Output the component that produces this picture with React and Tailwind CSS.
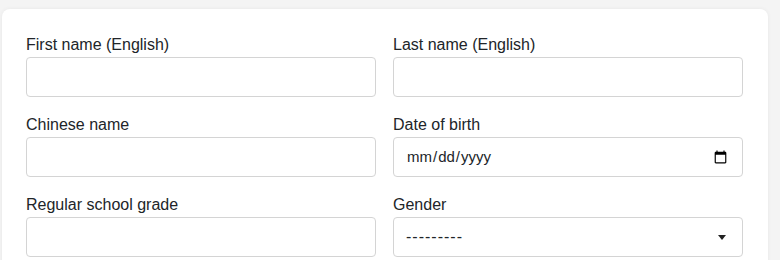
import React from 'react';

const Field = ({ label, children }) => (
  <div className="flex flex-col">
    <label className="text-base leading-6 text-[#212529]">{label}</label>
    {children}
  </div>
);

const inputCls =
  'h-[40px] w-full rounded-[4px] border border-[#d4d4d4] bg-white px-3 text-base text-[#212529] outline-none';

const App = () => {
  return (
    <div className="h-[260px] overflow-hidden bg-[#f4f4f4] pl-[2px] pr-3 pt-[9px] font-['Liberation_Sans',Arial,sans-serif]">
      <div className="h-[300px] rounded-lg bg-white px-6 pt-6 shadow-[0_0_4px_rgba(0,0,0,0.06)]">
        <div className="grid grid-cols-2 gap-x-[17px] gap-y-4 pr-[1px]">
          <Field label="First name (English)">
            <input type="text" className={inputCls} />
          </Field>
          <Field label="Last name (English)">
            <input type="text" className={inputCls} />
          </Field>
          <Field label="Chinese name">
            <input type="text" className={inputCls} />
          </Field>
          <Field label="Date of birth">
            <input type="date" className={inputCls + ' text-[15px]'} />
          </Field>
          <Field label="Regular school grade">
            <input type="text" className={inputCls} />
          </Field>
          <Field label="Gender">
            <div className="relative">
              <select className={inputCls + ' appearance-none tracking-[1px]'} defaultValue="">
                <option value="">---------</option>
                <option value="M">Male</option>
                <option value="F">Female</option>
              </select>
              <svg
                className="pointer-events-none absolute right-[17px] top-[18px]"
                width="8"
                height="5"
                viewBox="0 0 8 5"
              >
                <path d="M0 0h8L4 5z" fill="#222" />
              </svg>
            </div>
          </Field>
        </div>
      </div>
    </div>
  );
};

export default App;
